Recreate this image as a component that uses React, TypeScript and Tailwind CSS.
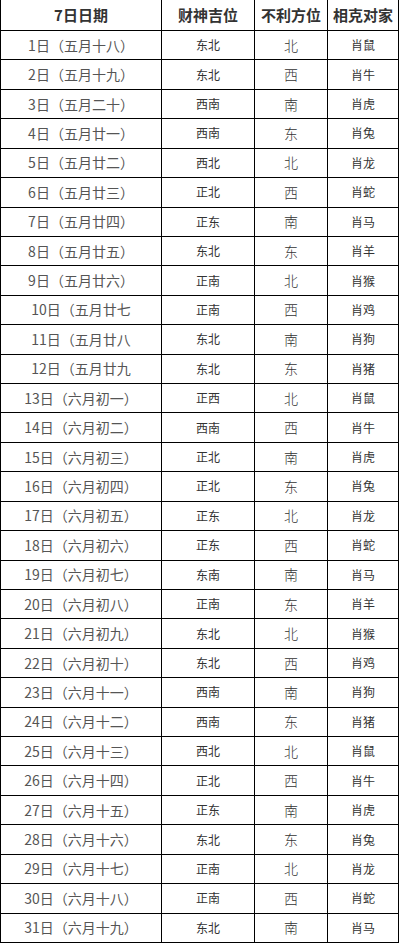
import React from "react";

const rows: [string, string, string, string][] = [
  ["1日（五月十八）", "东北", "北", "肖鼠"],
  ["2日（五月十九）", "东北", "西", "肖牛"],
  ["3日（五月二十）", "西南", "南", "肖虎"],
  ["4日（五月廿一）", "西南", "东", "肖兔"],
  ["5日（五月廿二）", "西北", "北", "肖龙"],
  ["6日（五月廿三）", "正北", "西", "肖蛇"],
  ["7日（五月廿四）", "正东", "南", "肖马"],
  ["8日（五月廿五）", "东北", "东", "肖羊"],
  ["9日（五月廿六）", "正南", "北", "肖猴"],
  ["10日（五月廿七", "正南", "西", "肖鸡"],
  ["11日（五月廿八", "东北", "南", "肖狗"],
  ["12日（五月廿九", "东北", "东", "肖猪"],
  ["13日（六月初一）", "正西", "北", "肖鼠"],
  ["14日（六月初二）", "西南", "西", "肖牛"],
  ["15日（六月初三）", "正北", "南", "肖虎"],
  ["16日（六月初四）", "正北", "东", "肖兔"],
  ["17日（六月初五）", "正东", "北", "肖龙"],
  ["18日（六月初六）", "正东", "西", "肖蛇"],
  ["19日（六月初七）", "东南", "南", "肖马"],
  ["20日（六月初八）", "正南", "东", "肖羊"],
  ["21日（六月初九）", "东北", "北", "肖猴"],
  ["22日（六月初十）", "东北", "西", "肖鸡"],
  ["23日（六月十一）", "西南", "南", "肖狗"],
  ["24日（六月十二）", "西南", "东", "肖猪"],
  ["25日（六月十三）", "西北", "北", "肖鼠"],
  ["26日（六月十四）", "正北", "西", "肖牛"],
  ["27日（六月十五）", "正东", "南", "肖虎"],
  ["28日（六月十六）", "东北", "东", "肖兔"],
  ["29日（六月十七）", "正南", "北", "肖龙"],
  ["30日（六月十八）", "正南", "西", "肖蛇"],
  ["31日（六月十九）", "东北", "南", "肖马"],
];

const headers = ["7日日期", "财神吉位", "不利方位", "相克对家"];

export default function App() {
  return (
    <div className="bg-white w-[400px] h-[943px] font-['Microsoft_YaHei','Noto_Sans_CJK_SC',sans-serif]">
      <div className="w-[399px] border-l border-r border-b border-black">
        <div className="grid grid-cols-[160px_93px_73px_71px] grid-rows-[30px_repeat(31,1fr)] h-[942px]">
          {headers.map((h, i) => (
            <div
              key={h}
              className={
                "flex items-center justify-center text-[15px] font-bold text-[#333] whitespace-nowrap" +
                (i > 0 ? " border-l border-black" : "")
              }
            >
              {h}
            </div>
          ))}
          {rows.map((r) =>
            r.map((cell, i) => (
              <div
                key={r[0] + i}
                className={
                  "flex items-center justify-center border-t border-black whitespace-nowrap overflow-hidden" +
                  (i > 0 ? " border-l" : "") +
                  (i === 0
                    ? " text-[14px] text-[#555]"
                    : i === 2
                      ? " text-[14px] font-light text-[#333]"
                      : " text-[12px] text-[#333]")
                }
              >
                {cell}
              </div>
            ))
          )}
        </div>
      </div>
    </div>
  );
}
